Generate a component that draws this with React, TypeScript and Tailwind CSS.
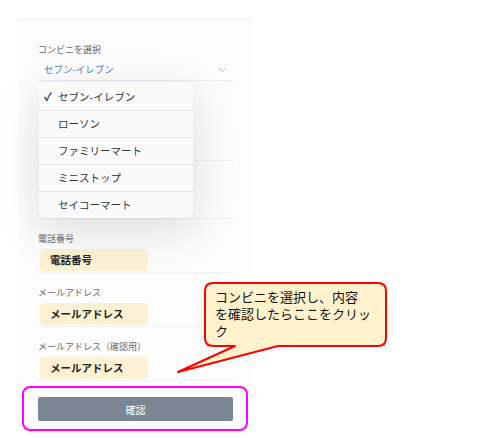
import React from 'react'

const jp = { fontFamily: '"Noto Sans CJK JP", "Noto Sans", sans-serif' }

const stores = ['セブン-イレブン', 'ローソン', 'ファミリーマート', 'ミニストップ', 'セイコーマート']

const Field = ({ label, value }: { label: string; value: string }) => (
  <div className="mt-[14px] border-b border-[#eef0f3] pb-[1px]">
    <div className="text-[9px] leading-[12px] text-[#6b6b6b]">{label}</div>
    <div className="mt-[4px] ml-[2px] flex h-[22px] w-[108px] items-center rounded-[4px] bg-[#fdf1d3] pl-[10px] text-[10.5px] font-bold text-[#222]">
      {value}
    </div>
  </div>
)

// fields hidden behind the open dropdown
const HiddenField = ({ h }: { h: number }) => <div className="border-b border-[#eceef2]" style={{ height: h }} />

export default function App() {
  return (
    <div className="relative h-[438px] w-[487px] overflow-hidden bg-white" style={jp}>
      <div className="ml-[19px] mt-[19px] w-[233px] border-t border-[#eef0f6] bg-[#fcfcfc] px-[19px] pt-[24px] pb-[10px]">
        <div className="text-[9px] leading-[12px] text-[#666]">コンビニを選択</div>
        <div className="mt-[7px] flex h-[18px] items-center justify-between border-b border-[#e8ebf3] pb-[4px] pl-[6px] pr-[6px]">
          <span className="text-[9.5px] text-[#4f7fd0]">セブン-イレブン</span>
          <svg width="9" height="6" viewBox="0 0 9 6" fill="none" stroke="#b8bcc4" strokeWidth="1">
            <path d="M1 1l3.5 3.5L8 1" />
          </svg>
        </div>
        <HiddenField h={80} />
        <HiddenField h={58} />

        <Field label="電話番号" value="電話番号" />
        <Field label="メールアドレス" value="メールアドレス" />
        <Field label="メールアドレス（確認用）" value="メールアドレス" />

        <button className="mt-[16px] flex h-[24px] w-full items-center justify-center rounded-[2px] bg-[#7b8593] text-[10px] text-white">
          確認
        </button>
      </div>

      {/* dropdown */}
      <div className="absolute left-[39px] top-[83px] w-[154px] overflow-hidden rounded-[8px] bg-[#fafafa] shadow-[0_12px_45px_rgba(0,0,0,0.13)]">
        {stores.map((s, i) => (
          <div
            key={s}
            className={`flex h-[27px] items-center text-[10.5px] text-[#333] ${i > 0 ? 'border-t border-[#e6e6e6]' : ''}`}
          >
            <span className="w-[19px] pl-[5px] text-[11px] font-bold">{i === 0 ? '✓' : ''}</span>
            <span>{s}</span>
          </div>
        ))}
      </div>

      {/* annotation frame */}
      <div className="absolute left-[22px] top-[386px] h-[45px] w-[226px] rounded-[8px] border-2 border-[#ff00ff]" />

      {/* callout */}
      <svg className="absolute left-0 top-0" width="487" height="438">
        <path
          d="M213 283 H378 Q386 283 386 291 V338 Q386 346 378 346 H278 L178 372 L235 346 H213 Q205 346 205 338 V291 Q205 283 213 283 Z"
          fill="#fff2cc"
          stroke="#ff0000"
          strokeWidth="2"
          strokeLinejoin="round"
        />
      </svg>
      <div className="absolute left-[215px] top-[288px] flex flex-col whitespace-nowrap text-[13px] leading-[17px] text-[#111]">
        <span className="h-[17px]">コンビニを選択し、内容</span>
        <span className="h-[17px]">を確認したらここをクリッ</span>
        <span className="h-[17px]">ク</span>
      </div>
    </div>
  )
}
